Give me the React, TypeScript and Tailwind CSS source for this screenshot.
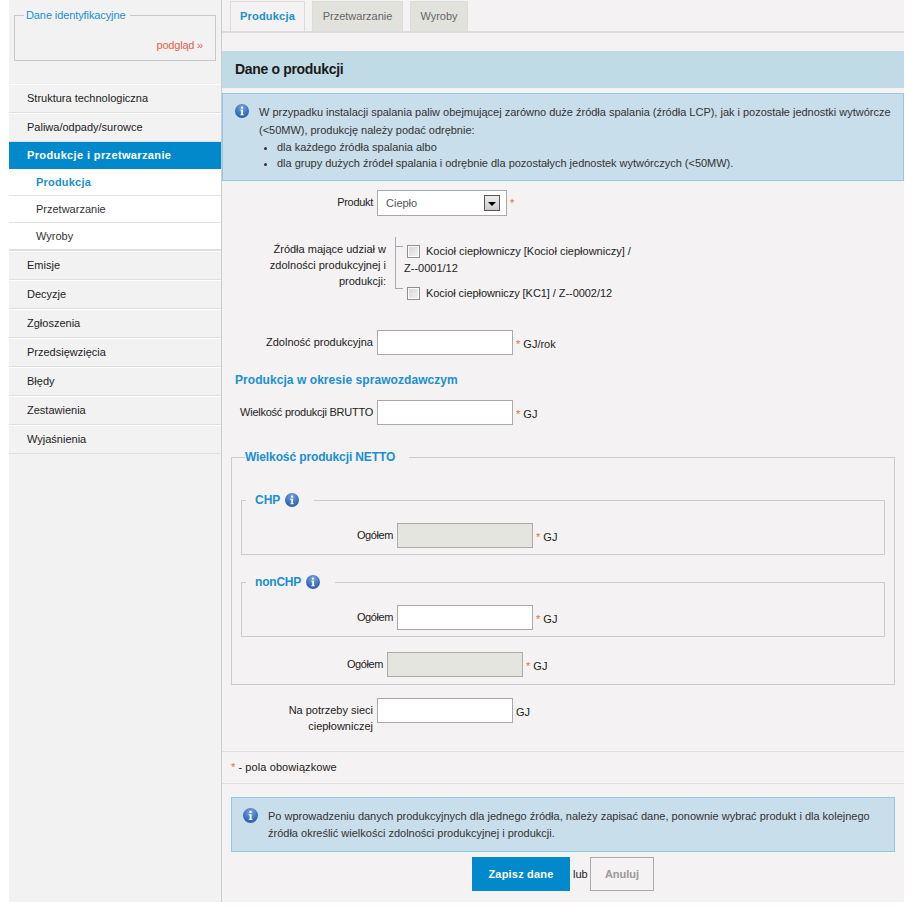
import type { ReactNode } from "react";

function InfoIcon({ id, size = 14 }: { id: string; size?: number }) {
  return (
    <svg width={size} height={size} viewBox="0 0 14 14" className="shrink-0">
      <defs>
        <radialGradient id={id} cx="50%" cy="28%" r="75%">
          <stop offset="0%" stopColor="#7fa8de" />
          <stop offset="60%" stopColor="#3f74c2" />
          <stop offset="100%" stopColor="#2a5aa6" />
        </radialGradient>
      </defs>
      <circle cx="7" cy="7" r="7" fill={`url(#${id})`} />
      <rect x="6" y="2.6" width="2" height="2" fill="#fff" />
      <path d="M5.4 5.8H8V10.2H8.8V11.2H5.4V10.2H6.2V6.8H5.4Z" fill="#fff" />
    </svg>
  );
}

function Star() {
  return <span className="text-[#e2702d]">*</span>;
}

function TextBox({ disabled = false }: { disabled?: boolean }) {
  return (
    <div
      className={`h-[25px] w-[136px] shrink-0 border border-[#aaaaaa] ${disabled ? "bg-[#e5e5e0]" : "bg-white"}`}
    />
  );
}

function Checkbox() {
  return (
    <div className="h-[13px] w-[13px] shrink-0 border border-[#8f8f8f] bg-gradient-to-br from-[#d5d5d5] to-[#f5f5f5] shadow-[inset_0_0_0_1px_#fff]" />
  );
}

function FormRow({
  label,
  labelWidth,
  unit,
  required = true,
  disabled = false,
  className = "",
  labelClass = "",
}: {
  label: ReactNode;
  labelWidth: string;
  unit: string;
  required?: boolean;
  disabled?: boolean;
  className?: string;
  labelClass?: string;
}) {
  return (
    <div className={`flex items-start ${className}`}>
      <div className={`${labelWidth} ${labelClass} pt-[4px] pr-[4px] text-right leading-[16px] text-[#222]`}>{label}</div>
      <TextBox disabled={disabled} />
      <div className="pt-[6px] pl-[3px] leading-[16px] text-[#222]">
        {required && <Star />} {unit}
      </div>
    </div>
  );
}

function MenuItem({ children }: { children: ReactNode }) {
  return (
    <div className="flex h-[29px] items-center border-t border-t-white border-b border-b-[#dfdfdf] pl-[18px] text-[#222]">
      {children}
    </div>
  );
}

function SubItem({ children, active = false, last = false }: { children: ReactNode; active?: boolean; last?: boolean }) {
  return (
    <div
      className={`flex items-center bg-white pl-[27px] ${last ? "h-[26px]" : "h-[27px] border-b border-[#e4e4e4]"} ${active ? "font-bold tracking-[0.2px] text-[#1a90d0]" : "text-[#333]"}`}
    >
      {children}
    </div>
  );
}

function Tab({ children, active = false, width }: { children: ReactNode; active?: boolean; width: string }) {
  return (
    <div
      className={`flex h-[30px] items-center justify-center border border-b-0 border-[#dcdcdc] ${width} ${active ? "bg-[#f4f2f3] font-bold tracking-[0.2px] text-[#1a90d0]" : "bg-[#e2e2dd] text-[#666]"}`}
    >
      {children}
    </div>
  );
}

export default function App() {
  return (
    <div className="min-h-[907px] w-[913px] bg-white pl-[9px] font-['Liberation_Sans',Arial,sans-serif] text-[11px]">
      <div className="flex h-[902px] w-[895px]">
        {/* sidebar */}
        <aside className="w-[213px] shrink-0 border-r border-[#cccccc] bg-[#f2f2f2]">
          <div className="h-[84px] px-[5px] pt-[8px]">
            <fieldset className="h-[53px] border border-[#c8c8c8] pr-[12px] pl-[9px]">
              <legend className="px-[2px] pr-[4px] leading-[14px] tracking-[-0.1px] text-[#1a90d0]">Dane identyfikacyjne</legend>
              <div className="pt-[15px] text-right tracking-[-0.2px] text-[#e2604d]">podgląd »</div>
            </fieldset>
          </div>
          <MenuItem>Struktura technologiczna</MenuItem>
          <MenuItem>Paliwa/odpady/surowce</MenuItem>
          <div className="flex h-[27px] items-center bg-[#0189cc] pl-[18px] font-bold tracking-[0.37px] text-white">
            Produkcje i przetwarzanie
          </div>
          <SubItem active>Produkcja</SubItem>
          <SubItem>Przetwarzanie</SubItem>
          <SubItem last>Wyroby</SubItem>
          <div className="h-[2px] bg-[#dfdfdf]" />
          <MenuItem>Emisje</MenuItem>
          <MenuItem>Decyzje</MenuItem>
          <MenuItem>Zgłoszenia</MenuItem>
          <MenuItem>Przedsięwzięcia</MenuItem>
          <MenuItem>Błędy</MenuItem>
          <MenuItem>Zestawienia</MenuItem>
          <MenuItem>Wyjaśnienia</MenuItem>
        </aside>

        {/* main */}
        <main className="w-[682px] bg-[#f4f2f3]">
          <div className="flex h-[33px] items-end gap-[7px] border-b-2 border-[#dcdcdc] pl-[8px]">
            <Tab active width="w-[75px]">Produkcja</Tab>
            <Tab width="w-[91px]">Przetwarzanie</Tab>
            <Tab width="w-[58px]">Wyroby</Tab>
          </div>

          <div className="mt-[18px] flex h-[37px] items-center bg-[#c1dbe6] pl-[13px] text-[14px] font-bold tracking-[-0.33px] text-[#1a1a1a]">
            Dane o produkcji
          </div>

          <div className="mt-[5px] flex h-[88px] gap-[10px] border border-[#93c9df] bg-[#c8deea] pt-[9px] pl-[12px] text-[#333]">
            <div className="pt-[1px]">
              <InfoIcon id="info-top" />
            </div>
            <div className="leading-[16px] tracking-[-0.015px]">
              <p className="leading-[18px]">
                W przypadku instalacji spalania paliw obejmującej zarówno duże źródła spalania (źródła LCP), jak i pozostałe jednostki wytwórcze
                <br />
                (&lt;50MW), produkcję należy podać odrębnie:
              </p>
              <ul className="list-disc pl-[18px]">
                <li>dla każdego źródła spalania albo</li>
                <li>dla grupy dużych źródeł spalania i odrębnie dla pozostałych jednostek wytwórczych (&lt;50MW).</li>
              </ul>
            </div>
          </div>

          {/* produkt */}
          <div className="mt-[9px] flex items-start">
            <div className="w-[155px] pt-[4px] pr-[4px] text-right leading-[16px] tracking-[-0.3px] text-[#222]">Produkt</div>
            <div className="flex h-[26px] w-[130px] items-center justify-between border border-[#aaaaaa] bg-white pr-[6px] pl-[8px] text-[#555]">
              Ciepło
              <div className="flex h-[16px] w-[16px] items-center justify-center border border-[#555] bg-gradient-to-b from-[#eeeeee] to-[#cccccc]">
                <div className="mt-[2px] h-0 w-0 border-x-[4px] border-t-[4px] border-x-transparent border-t-black" />
              </div>
            </div>
            <div className="pt-[5px] pl-[3px] leading-[16px]">
              <Star />
            </div>
          </div>

          {/* zrodla */}
          <div className="mt-[21px] flex items-start">
            <div className="w-[173px] shrink-0 pt-[4px] pr-[9px] pl-[40px] text-right leading-[16px] text-[#222]">
              Źródła mające udział w zdolności produkcyjnej i produkcji:
            </div>
            <div className="h-[52px] w-[8px] shrink-0 border-b border-l border-[#aaaaaa]">
              <div className="mt-[9px] h-px bg-[#aaaaaa]" />
            </div>
            <div className="w-[300px] text-[#222]">
              <div className="flex items-center gap-[6px] pt-[7px] pl-[4px]">
                <Checkbox />
                <span className="leading-[14px]">Kocioł ciepłowniczy [Kocioł ciepłowniczy] /</span>
              </div>
              <div className="pt-[2px] pl-[1px] leading-[16px]">Z--0001/12</div>
              <div className="flex items-center gap-[6px] pt-[10px] pl-[4px]">
                <Checkbox />
                <span className="leading-[14px] tracking-[-0.06px]">Kocioł ciepłowniczy [KC1] / Z--0002/12</span>
              </div>
            </div>
          </div>

          <FormRow className="mt-[30px]" labelWidth="w-[155px]" label="Zdolność produkcyjna" unit="GJ/rok" />

          <h2 className="mt-[17px] pl-[13px] text-[12px] leading-[16px] font-bold tracking-[0.06px] text-[#1a90d0]">
            Produkcja w okresie sprawozdawczym
          </h2>

          <FormRow
            className="mt-[12px]"
            labelWidth="w-[155px]"
            labelClass="tracking-[-0.25px]"
            label="Wielkość produkcji BRUTTO"
            unit="GJ"
          />

          {/* netto */}
          <fieldset className="mx-[9px] mt-[24px] h-[236px] border border-[#cccccc] px-[9px]">
            <legend className="ml-[4px] pr-[14px] text-[12px] leading-[16px] font-bold tracking-[-0.12px] text-[#1a90d0]">
              Wielkość produkcji NETTO
            </legend>
            <fieldset className="mt-[27px] h-[63px] border border-[#cccccc]">
              <legend className="ml-[4px] flex items-center gap-[5px] px-[9px] pr-[15px] text-[12px] leading-[16px] font-bold text-[#1a90d0]">
                CHP <InfoIcon id="info-chp" />
              </legend>
              <FormRow className="mt-[15px]" labelWidth="w-[155px]" labelClass="tracking-[-0.4px]" label="Ogółem" unit="GJ" disabled />
            </fieldset>
            <fieldset className="mt-[19px] h-[63px] border border-[#cccccc]">
              <legend className="ml-[4px] flex items-center gap-[5px] px-[9px] pr-[15px] text-[12px] leading-[16px] font-bold tracking-[-0.2px] text-[#1a90d0]">
                nonCHP <InfoIcon id="info-nonchp" />
              </legend>
              <FormRow className="mt-[15px]" labelWidth="w-[155px]" labelClass="tracking-[-0.4px]" label="Ogółem" unit="GJ" />
            </fieldset>
            <FormRow className="mt-[15px]" labelWidth="w-[146px]" labelClass="tracking-[-0.4px]" label="Ogółem" unit="GJ" disabled />
          </fieldset>

          <FormRow
            className="mt-[13px]"
            labelWidth="w-[155px]"
            label={
              <>
                Na potrzeby sieci
                <br />
                ciepłowniczej
              </>
            }
            unit="GJ"
            required={false}
          />

          <div className="mt-[17px] flex h-[33px] items-center border-y border-[#e0dede] pl-[9px] tracking-[0.1px] text-[#222]">
            <Star />
            <span className="pl-[3px]">- pola obowiązkowe</span>
          </div>

          <div className="mx-[9px] mt-[13px] flex h-[55px] gap-[10px] border border-[#93c9df] bg-[#c8deea] pt-[10px] pl-[11px] text-[#333]">
            <InfoIcon id="info-bottom" size={15} />
            <p className="leading-[17px]">
              Po wprowadzeniu danych produkcyjnych dla jednego źródła, należy zapisać dane, ponownie wybrać produkt i dla kolejnego
              <br />
              źródła określić wielkości zdolności produkcyjnej i produkcji.
            </p>
          </div>

          <div className="mt-[5px] flex items-center pl-[250px] text-[#222]">
            <div className="flex h-[34px] w-[98px] items-center justify-center bg-[#0189cc] font-bold tracking-[0.2px] text-white">
              Zapisz dane
            </div>
            <span className="w-[20px] pl-[3px]">lub</span>
            <div className="flex h-[34px] w-[64px] items-center justify-center border border-[#aaaaaa] font-bold text-[#999]">
              Anuluj
            </div>
          </div>
        </main>
      </div>
    </div>
  );
}
